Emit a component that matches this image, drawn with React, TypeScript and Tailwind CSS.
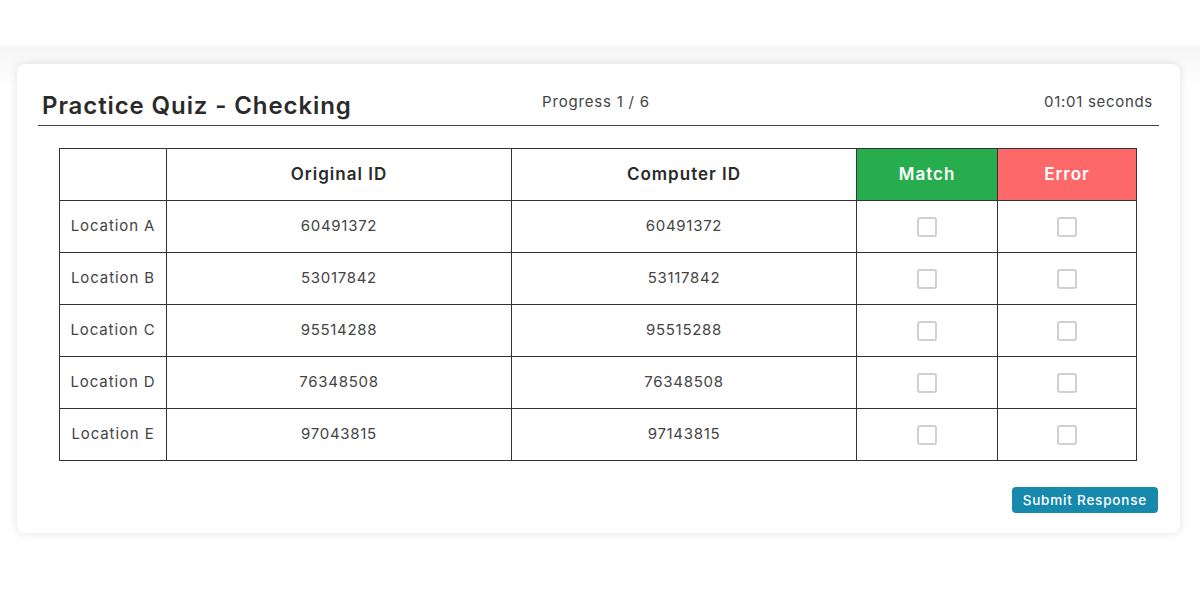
const rows = [
  { loc: "Location A", orig: "60491372", comp: "60491372" },
  { loc: "Location B", orig: "53017842", comp: "53117842" },
  { loc: "Location C", orig: "95514288", comp: "95515288" },
  { loc: "Location D", orig: "76348508", comp: "76348508" },
  { loc: "Location E", orig: "97043815", comp: "97143815" },
];

function Box() {
  return <div className="w-[20px] h-[20px] border-2 border-[#d0d0d0] rounded-[3px] bg-white" />;
}

export default function App() {
  return (
    <div className="w-[1200px] h-[600px] bg-white font-['Inter','Liberation_Sans',sans-serif] text-[#333]">
      <div className="h-[46px] bg-white" />
      <div className="bg-gradient-to-b from-[#f5f5f5] to-white to-[40px] pt-[18px] px-[17px] pr-[20px]">
        <div className="h-[469px] bg-white rounded-[8px] shadow-[0_0_10px_rgba(0,0,0,0.12)] pt-[24px] px-[21px]">
          <div className="flex items-start border-b-[1.5px] border-[#444] pb-[4px]">
            <h1 className="w-[460px] pl-[4px] pt-[3px] text-[24px] leading-[30px] font-semibold text-[#2a2a2a] tracking-[0.9px]">
              Practice Quiz - Checking
            </h1>
            <div className="w-[196px] pt-[2px] text-center text-[15px] leading-[24px] text-[#444] tracking-[0.8px]">Progress 1 / 6</div>
            <div className="flex-1 pt-[2px] text-right pr-[6px] text-[15px] leading-[24px] text-[#444] tracking-[0.7px]">01:01 seconds</div>
          </div>
          <div className="pt-[22px] pl-[21px]">
            <table className="border-collapse w-[1077px] text-[15px] table-fixed tracking-[0.7px]">
              <colgroup>
                <col className="w-[107px]" />
                <col className="w-[345px]" />
                <col className="w-[345px]" />
                <col className="w-[141px]" />
                <col className="w-[139px]" />
              </colgroup>
              <thead>
                <tr className="h-[52px]">
                  <th className="border border-[#333]" />
                  <th className="border border-[#333] font-semibold text-[17px] text-[#2a2a2a] tracking-[1px]">Original ID</th>
                  <th className="border border-[#333] font-semibold text-[17px] text-[#2a2a2a] tracking-[1px]">Computer ID</th>
                  <th className="border border-[#333] bg-[#28ad4e] font-semibold text-[17px] text-white tracking-[1px]">Match</th>
                  <th className="border border-[#333] bg-[#fd6868] font-semibold text-[17px] text-white tracking-[1px]">Error</th>
                </tr>
              </thead>
              <tbody>
                {rows.map((r) => (
                  <tr key={r.loc} className="h-[52px]">
                    <td className="border border-[#333] text-center text-[#444] tracking-[0.9px]">{r.loc}</td>
                    <td className="border border-[#333] text-center text-[#444]">{r.orig}</td>
                    <td className="border border-[#333] text-center text-[#444]">{r.comp}</td>
                    <td className="border border-[#333]">
                      <div className="flex justify-center"><Box /></div>
                    </td>
                    <td className="border border-[#333]">
                      <div className="flex justify-center"><Box /></div>
                    </td>
                  </tr>
                ))}
              </tbody>
            </table>
          </div>
          <div className="flex justify-end pt-[26px] pr-[1px]">
            <button className="h-[26px] px-[11px] bg-[#1689ad] text-white text-[13.5px] font-medium rounded-[4px] tracking-[0.8px]">
              Submit Response
            </button>
          </div>
        </div>
      </div>
    </div>
  );
}
